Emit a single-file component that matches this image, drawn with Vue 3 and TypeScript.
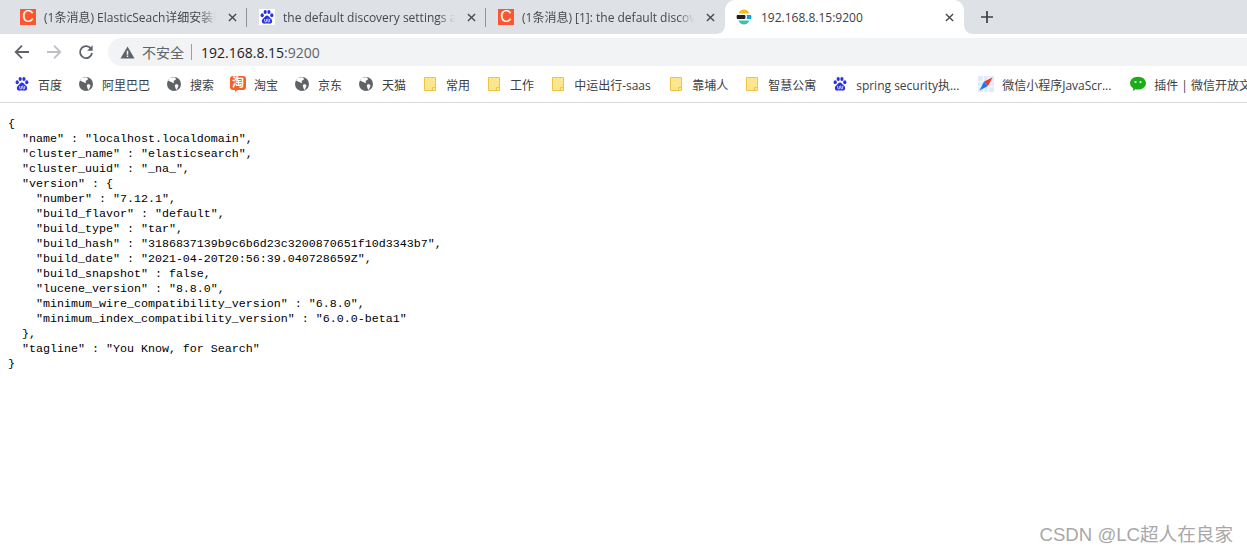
<script setup lang="ts">
type Icon = 'baidu' | 'globe' | 'taobao' | 'folder' | 'compass' | 'wechat'
interface Bookmark { icon: Icon; label: string; width?: number }

const tabs = [
  { icon: 'c', title: '(1条消息) ElasticSeach详细安装教', active: false },
  { icon: 'baidu', title: 'the default discovery settings a', active: false },
  { icon: 'c', title: '(1条消息) [1]: the default discov', active: false },
  { icon: 'elastic', title: '192.168.8.15:9200', active: true },
]

const bookmarks: Bookmark[] = [
  { icon: 'baidu', label: '百度' },
  { icon: 'globe', label: '阿里巴巴' },
  { icon: 'globe', label: '搜索' },
  { icon: 'taobao', label: '淘宝' },
  { icon: 'globe', label: '京东' },
  { icon: 'globe', label: '天猫' },
  { icon: 'folder', label: '常用' },
  { icon: 'folder', label: '工作' },
  { icon: 'folder', label: '中运出行-saas', width: 78 },
  { icon: 'folder', label: '靠埔人' },
  { icon: 'folder', label: '智慧公寓' },
  { icon: 'baidu', label: 'spring security执...', width: 106 },
  { icon: 'compass', label: '微信小程序JavaScr...', width: 112 },
  { icon: 'wechat', label: '插件 | 微信开放文档' },
]

const json = `{
  "name" : "localhost.localdomain",
  "cluster_name" : "elasticsearch",
  "cluster_uuid" : "_na_",
  "version" : {
    "number" : "7.12.1",
    "build_flavor" : "default",
    "build_type" : "tar",
    "build_hash" : "3186837139b9c6b6d23c3200870651f10d3343b7",
    "build_date" : "2021-04-20T20:56:39.040728659Z",
    "build_snapshot" : false,
    "lucene_version" : "8.8.0",
    "minimum_wire_compatibility_version" : "6.8.0",
    "minimum_index_compatibility_version" : "6.0.0-beta1"
  },
  "tagline" : "You Know, for Search"
}`
</script>

<template>
  <div class="browser">
    <div class="tabstrip">
      <div v-for="(tab, i) in tabs" :key="i" class="tab" :class="{ active: tab.active, sep: i < 2 }">
        <span v-if="tab.icon === 'c'" class="csdn">C</span>
        <svg v-else-if="tab.icon === 'baidu'" class="ico" viewBox="0 0 16 16">
          <rect width="16" height="16" fill="#fff" />
          <g fill="#2932e1">
            <ellipse cx="3.200" cy="6.200" rx="1.600" ry="2" />
            <ellipse cx="6.200" cy="3" rx="1.600" ry="2.100" />
            <ellipse cx="9.900" cy="3" rx="1.600" ry="2.100" />
            <ellipse cx="12.800" cy="6.200" rx="1.600" ry="2" />
            <path d="M8 6.600c-1.600 0-2.200 1.500-3.200 2.500C3.600 10.200 2.600 11 2.900 12.700 3.200 14.400 4.700 14.800 6 14.600c1.300-.2 2.700-.2 4 0 1.300.2 2.800-.2 3.100-1.900.3-1.700-.7-2.500-1.900-3.600C10.200 8.100 9.600 6.600 8 6.600z" />
          </g>
          <path d="M5.700 10v2.200c0 1 2 1 2 0V10M8.900 9.500v2.700c0 1 1.800 1 1.800 0V10" fill="none" stroke="#fff" stroke-width=".8" />
        </svg>
        <svg v-else class="ico" viewBox="0 0 16 16">
          <path d="M2.500 4.500C3.500 1.800 5.600.5 8 .5c2.500 0 4.400 1.400 5.300 4z" fill="#f0bf1a" />
          <path d="M1 6h7.500c.7 0 1 .7 1 2s-.3 2-1 2H1C.7 9 .6 8.500.6 8S.7 7 1 6z" fill="#231f20" />
          <path d="M10.500 6H15c.3.7.4 1.300.4 2s-.1 1.300-.4 2h-4.500c.4-.6.500-1.200.500-2s-.1-1.400-.5-2z" fill="#07a5de" />
          <path d="M2.500 11.500h10.800c-.9 2.600-2.800 4-5.300 4-2.400 0-4.500-1.300-5.500-4z" fill="#3ebeb0" />
        </svg>
        <span class="title">{{ tab.title }}</span>
        <svg class="close" viewBox="0 0 10 10">
          <path d="M1 1l8 8M9 1l-8 8" stroke="#45484c" stroke-width="1.500" fill="none" />
        </svg>
      </div>
      <svg class="plus" viewBox="0 0 12 12">
        <path d="M6 0v12M0 6h12" stroke="#3c4043" stroke-width="1.700" fill="none" />
      </svg>
    </div>

    <div class="toolbar">
      <svg class="nav" viewBox="0 0 16 16">
        <path d="M15 8H2M8 1.700L1.700 8 8 14.300" stroke="#5f6368" stroke-width="1.800" fill="none" />
      </svg>
      <svg class="nav" viewBox="0 0 16 16">
        <path d="M1 8h13M8 1.700L14.300 8 8 14.300" stroke="#bdc1c6" stroke-width="1.800" fill="none" />
      </svg>
      <svg class="nav" viewBox="0 0 16 16">
        <path d="M13.200 5A6 6 0 1 0 14 9" stroke="#5f6368" stroke-width="1.800" fill="none" />
        <path d="M14.600 1.200v5.500H9.100z" fill="#5f6368" />
      </svg>
      <div class="omnibox">
        <svg class="warn" viewBox="0 0 16 16">
          <path d="M8 1.500L15.500 14.500H.5z" fill="#5f6368" />
          <path d="M7.200 6h1.600v4.500H7.200zM7.200 11.300h1.600v1.500H7.200z" fill="#f1f3f4" />
        </svg>
        <span class="insecure">不安全</span>
        <span class="divider"></span>
        <span class="host">192.168.8.15</span><span class="port">:9200</span>
      </div>
    </div>

    <div class="bookmarks">
      <div v-for="(b, i) in bookmarks" :key="i" class="bm">
        <svg v-if="b.icon === 'baidu'" class="ico" viewBox="0 0 16 16">
          <g fill="#2932e1">
            <ellipse cx="3.200" cy="6.200" rx="1.600" ry="2" />
            <ellipse cx="6.200" cy="3" rx="1.600" ry="2.100" />
            <ellipse cx="9.900" cy="3" rx="1.600" ry="2.100" />
            <ellipse cx="12.800" cy="6.200" rx="1.600" ry="2" />
            <path d="M8 6.600c-1.600 0-2.200 1.500-3.200 2.500C3.600 10.200 2.600 11 2.900 12.700 3.200 14.400 4.700 14.800 6 14.600c1.300-.2 2.700-.2 4 0 1.300.2 2.800-.2 3.100-1.900.3-1.700-.7-2.500-1.900-3.600C10.200 8.100 9.600 6.600 8 6.600z" />
          </g>
          <path d="M5.700 10v2.200c0 1 2 1 2 0V10M8.900 9.500v2.700c0 1 1.800 1 1.800 0V10" fill="none" stroke="#fff" stroke-width=".8" />
        </svg>
        <svg v-else-if="b.icon === 'globe'" class="ico" viewBox="0 0 16 16">
          <circle cx="8" cy="8" r="7" fill="#5f6368" />
          <path d="M8.500 1.200c1 .8 1.600 1.500 1.300 2.200-.4.800-1.500.6-2 1.300-.5.700.5 1.300 0 2-.5.600-1.800 0-2.600-.6L2 4.500 4 2zM9.500 8.500c1.200-.4 2.400 0 2.800.8.300.7-.2 1.300-.5 2.200-.3 1-.8 2-1.700 2.500-.4-.8-.3-1.700-.8-2.600-.4-.9-.9-2.500.2-2.900z" fill="#fff" />
        </svg>
        <span v-else-if="b.icon === 'taobao'" class="taobao">淘</span>
        <svg v-else-if="b.icon === 'folder'" class="ico" viewBox="0 0 16 16">
          <path d="M2.500 1.500h11v13h-11z" fill="#fde68f" stroke="#eec443" />
          <path d="M10.500 14.500v-3h3" fill="#fde68f" stroke="#eec443" />
        </svg>
        <svg v-else-if="b.icon === 'compass'" class="ico" viewBox="0 0 16 16">
          <rect width="16" height="16" fill="#dfeafa" />
          <path d="M0 5.500h16M0 10.500h16M5.500 0v16M10.500 0v16" stroke="#f4f8fe" stroke-width="1.500" />
          <path d="M14.500 1.500L6 5.500 10 10z" fill="#f0392b" />
          <path d="M1.500 14.500L6 5.500 10 10z" fill="#1b7be6" />
        </svg>
        <svg v-else class="ico" viewBox="0 0 16 16">
          <path d="M8 .8c4.400 0 8 2.800 8 6.400s-3.600 6.400-8 6.400c-.9 0-1.700-.1-2.500-.3L2.800 15l.5-2.800C1.300 11 0 9.200 0 7.200 0 3.600 3.600.8 8 .8z" fill="#1aad19" />
          <circle cx="5.500" cy="6" r="1.100" fill="#fff" />
          <circle cx="10.500" cy="6" r="1.100" fill="#fff" />
        </svg>
        <span class="bm-label" :style="b.width ? { minWidth: b.width + 'px' } : undefined">{{ b.label }}</span>
      </div>
    </div>

    <pre class="json">{{ json }}</pre>
    <div class="watermark">CSDN @LC超人在良家</div>
  </div>
</template>

<style scoped>
.browser {
  position: relative;
  width: 1247px;
  height: 554px;
  overflow: hidden;
  background: #fff;
  font-family: "Open Sans", "Noto Sans CJK SC", sans-serif;
}
.tabstrip {
  display: flex;
  align-items: flex-end;
  height: 34px;
  padding-left: 8px;
  background: #dee1e6;
}
.tab {
  position: relative;
  display: flex;
  align-items: center;
  width: 239px;
  height: 34px;
  padding: 0 10px 0 12px;
  box-sizing: border-box;
  flex: none;
  color: #45484c;
}
.tab.sep::after {
  content: "";
  position: absolute;
  right: 0;
  top: 8px;
  width: 1px;
  height: 19px;
  background: #8f9296;
}
.tab.active {
  padding-left: 11px;
  background: #fff;
  border-radius: 10px 10px 0 0;
  color: #3c4043;
}
.tab.active::before,
.tab.active::after {
  content: "";
  position: absolute;
  bottom: 0;
  width: 8px;
  height: 8px;
}
.tab.active::before {
  left: -8px;
  background: radial-gradient(circle at 0 0, transparent 7.5px, #fff 8px);
}
.tab.active::after {
  right: -8px;
  background: radial-gradient(circle at 100% 0, transparent 7.5px, #fff 8px);
}
.tab.active .title {
  margin-left: 9px;
}
.csdn {
  flex: none;
  width: 16px;
  height: 16px;
  background: #fc5531;
  color: #fff;
  font: 16px/16px "Liberation Sans", sans-serif;
  text-align: center;
}
.ico {
  flex: none;
  width: 16px;
  height: 16px;
}
.taobao {
  position: relative;
  flex: none;
  width: 16px;
  height: 14px;
  margin-bottom: 2px;
  border-radius: 3px;
  background: #f4622a;
  color: #fff;
  font-size: 12px;
  font-weight: 700;
  line-height: 14px;
  text-align: center;
}
.taobao::after {
  content: "";
  position: absolute;
  left: 5px;
  top: 13px;
  border-top: 3px solid #f4622a;
  border-right: 4px solid transparent;
}
.title {
  flex: 1;
  min-width: 0;
  margin-left: 8px;
  padding-top: 2px;
  overflow: hidden;
  white-space: nowrap;
  font-size: 12px;
  line-height: 16px;
  -webkit-mask-image: linear-gradient(to right, #000 calc(100% - 24px), transparent calc(100% - 8px));
  mask-image: linear-gradient(to right, #000 calc(100% - 24px), transparent calc(100% - 8px));
}
.tab.active .title {
  -webkit-mask-image: none;
  mask-image: none;
}
.close {
  flex: none;
  width: 9px;
  height: 9px;
  margin-left: 4px;
}
.plus {
  width: 12px;
  height: 12px;
  margin: 0 0 11px 17px;
}
.toolbar {
  display: flex;
  align-items: center;
  height: 32px;
  padding: 4px 0 0 14px;
  background: #fff;
  box-sizing: border-box;
}
.nav {
  flex: none;
  width: 16px;
  height: 16px;
  margin-right: 16px;
}
.omnibox {
  flex: 1;
  display: flex;
  align-items: center;
  height: 28px;
  margin-left: -2px;
  padding-left: 12px;
  background: #f1f3f4;
  border-radius: 14px 0 0 14px;
}
.warn {
  width: 15px;
  height: 15px;
  flex: none;
}
.insecure {
  margin-left: 7px;
  font-size: 14px;
  color: #5f6368;
}
.divider {
  width: 1px;
  height: 16px;
  margin: 0 9px 0 7px;
  background: #9aa0a6;
}
.host {
  font-size: 14px;
  color: #202124;
}
.port {
  font-size: 14px;
  color: #5f6368;
}
.bookmarks {
  display: flex;
  align-items: center;
  gap: 16px;
  height: 37px;
  padding-left: 14px;
  box-sizing: border-box;
  background: #fff;
  border-bottom: 1px solid #d8d9da;
  white-space: nowrap;
  overflow: hidden;
}
.bm {
  display: flex;
  align-items: center;
  gap: 8px;
  flex: none;
  font-size: 12px;
  color: #3c4043;
}
.bm-label {
  padding-top: 2px;
}
.json {
  margin: 0;
  padding: 14px 0 0 8px;
  font: 11.67px/15px "Liberation Mono", "DejaVu Sans Mono", monospace;
  color: #000;
}
.watermark {
  position: absolute;
  right: 14px;
  bottom: 8px;
  font-family: "Liberation Sans", "Noto Sans CJK SC", sans-serif;
  font-size: 18.6px;
  line-height: 22px;
  color: #a8a8a8;
}
</style>

<style>
html, body { margin: 0; background: #fff; }
</style>
